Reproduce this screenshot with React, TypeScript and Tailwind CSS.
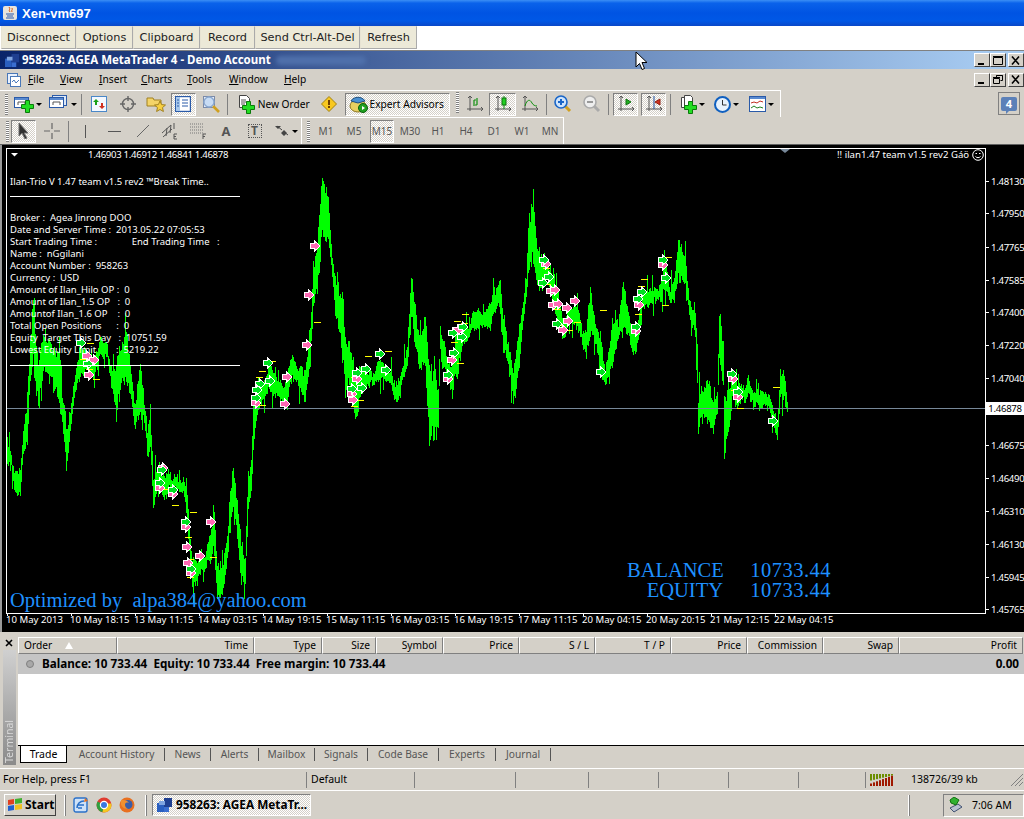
import React from "react";

// [x, top, bottom] of the green band, read off the chart by hand
const band: number[][] = [
  [7,443,463],[12,462,473],[15,467,497],[20,473,501],[23,433,460],[27,390,443],[30,337,380],[33,293,370],[38,367,413],
  [42,333,373],[47,333,373],[55,347,390],[59,353,408],[63,400,430],[66,427,468],[70,405,437],[75,373,390],[80,343,380],
  [87,353,370],[93,360,380],[100,337,357],[107,347,360],[112,370,390],[117,360,412],[125,323,377],[132,380,407],
  [135,407,433],[140,360,413],[143,393,423],[147,427,450],[150,407,453],[153,477,518],[157,460,493],[163,470,500],
  [170,473,490],[177,478,490],[183,480,493],[187,493,523],[191,553,588],[197,560,580],[205,553,567],[211,523,560],
  [214,503,560],[217,560,597],[223,563,597],[227,537,560],[229,500,537],[233,458,510],[237,500,537],[241,543,587],
  [245,557,587],[248,470,523],[251,460,493],[253,400,453],[257,377,413],[263,383,400],[270,363,393],[277,380,400],
  [283,387,403],[287,377,410],[292,347,377],[297,363,380],[305,367,403],[310,330,367],[313,263,313],[317,240,293],
  [322,170,237],[328,192,243],[332,260,280],[335,277,317],[339,293,333],[342,293,367],[345,343,400],[348,337,383],
  [355,370,417],[360,367,400],[367,370,383],[373,373,383],[380,353,377],[387,367,380],[397,383,407],[402,363,380],
  [407,343,367],[411,276,320],[415,305,347],[420,337,370],[425,308,367],[429,367,445],[434,367,447],[438,383,432],
  [440,323,357],[447,360,380],[452,357,397],[457,330,367],[465,327,343],[470,320,333],[477,307,330],[483,317,330],
  [490,300,330],[497,283,303],[500,277,317],[503,317,350],[508,340,367],[513,370,403],[517,337,387],[522,303,330],
  [526,277,300],[528,220,280],[532,192,267],[537,237,287],[542,260,293],[547,263,283],[552,273,303],[557,283,320],
  [562,317,340],[570,310,327],[577,303,327],[582,327,343],[586,330,355],[590,285,337],[595,320,340],[600,333,373],
  [605,367,385],[610,340,377],[615,310,350],[618,323,343],[623,280,330],[627,300,337],[632,330,353],[637,327,350],
  [642,290,310],[650,285,303],[658,293,303],[665,253,287],[670,287,303],[675,270,293],[678,234,283],[685,252,283],
  [689,297,317],[695,313,338],[697,338,380],[698,393,433],[702,390,420],[708,375,420],[713,403,435],[717,393,417],
  [719,310,370],[723,343,390],[724,393,459],[728,392,437],[732,370,400],[737,380,407],[742,390,403],[747,375,397],
  [753,387,403],[758,390,410],[765,390,403],[771,400,417],[777,420,442],[780,370,400],[784,367,400],[787,402,415],
];

function seeded(a: number) {
  return () => {
    a = (a + 0x6d2b79f5) | 0;
    let t = Math.imul(a ^ (a >>> 15), 1 | a);
    t = (t + Math.imul(t ^ (t >>> 7), 61 | t)) ^ t;
    return ((t ^ (t >>> 14)) >>> 0) / 4294967296;
  };
}

function buildPath() {
  const rnd = seeded(384);
  let d = "";
  let k = 0;
  let wobble = 0;
  for (let x = 7; x <= 787; x++) {
    while (k < band.length - 2 && band[k + 1][0] < x) k++;
    const [x0, t0, b0] = band[k];
    const [x1, t1, b1] = band[k + 1];
    const f = (x - x0) / (x1 - x0);
    const t = t0 + (t1 - t0) * f;
    const b = b0 + (b1 - b0) * f;
    if (x % 3 === 0) wobble = (rnd() - 0.5) * 7;
    const c = (t + b) / 2 + wobble;
    const h = (b - t) / 2;
    let top = c - h * (0.55 + 0.55 * rnd());
    let bot = c + h * (0.55 + 0.55 * rnd());
    // the odd long wick
    const r = rnd();
    if (r < 0.09) top -= 4 + rnd() * 14;
    else if (r < 0.18) bot += 4 + rnd() * 14;
    d += `M${x + 0.5} ${Math.round(top)}V${Math.round(bot)}`;
  }
  return d;
}

const pink = [[87,356],[94,360],[89,375],[315,246],[309,295],[307,345],[287,377],[285,404],[256,403],[163,468],[160,488],[173,494],[186,527],[211,522],[187,547],[200,556],[188,563],[191,573],[352,394],[353,400],[357,379],[448,379],[452,360],[458,330],[546,264],[551,291],[555,290],[553,305],[558,304],[567,308],[575,301],[568,321],[563,330],[636,331],[639,305],[663,265],[733,379],[738,397]];
const lime = [[81,343],[88,364],[268,363],[270,381],[260,384],[257,390],[256,398],[162,470],[160,483],[173,490],[186,522],[191,569],[352,389],[357,373],[362,388],[366,369],[380,354],[386,370],[448,375],[454,353],[453,333],[462,337],[463,327],[544,260],[549,277],[543,283],[557,324],[601,372],[636,327],[638,299],[642,292],[663,260],[666,278],[732,374],[738,392],[773,421]];
const dashes = [[87,343],[80,359],[86,369],[93,379],[314,322],[269,361],[259,371],[256,377],[259,405],[163,489],[172,505],[190,512],[185,537],[187,559],[187,577],[210,557],[365,356],[385,351],[357,400],[351,406],[351,377],[454,321],[462,314],[461,323],[451,342],[457,363],[543,268],[544,284],[554,309],[557,325],[566,330],[574,322],[600,310],[641,279],[638,286],[635,314],[665,257],[662,305],[773,387],[737,408],[731,390]];

const prices: [string, number][] = [["1.48130",181],["1.47950",213],["1.47765",247],["1.47585",280],["1.47400",312],["1.47220",345],["1.47040",378],["1.46675",445],["1.46490",478],["1.46310",511],["1.46130",544],["1.45945",577],["1.45765",609]];
const times = ["10 May 2013","10 May 18:15","13 May 11:15","14 May 03:15","14 May 19:15","15 May 11:15","16 May 03:15","16 May 19:15","17 May 11:15","20 May 04:15","20 May 20:15","21 May 12:15","22 May 04:15"];

const infoLines = [
  "Broker :  Agea Jinrong DOO",
  "Date and Server Time :  2013.05.22 07:05:53",
  "Start Trading Time :              End Trading Time   :",
  "Name :  nGgilani",
  "Account Number :  958263",
  "Currency :  USD",
  "Amount of Ilan_Hilo OP :  0",
  "Amount of Ilan_1.5 OP   :  0",
  "Amountof Ilan_1.6 OP    :  0",
  "Total Open Positions      :  0",
  "Equity  Target This Day   :  10751.59",
  "Lowest Equity Limit        :  5219.22",
];

const columns = [
  { label: "Order", w: "w-[99px]", left: true },
  { label: "Time", w: "w-[137px]" },
  { label: "Type", w: "w-[68px]" },
  { label: "Size", w: "w-[54px]" },
  { label: "Symbol", w: "w-[67px]" },
  { label: "Price", w: "w-[76px]" },
  { label: "S / L", w: "w-[76px]" },
  { label: "T / P", w: "w-[76px]" },
  { label: "Price", w: "w-[76px]" },
  { label: "Commission", w: "w-[76px]" },
  { label: "Swap", w: "w-[76px]" },
  { label: "Profit", w: "w-[124px]" },
];

const tabs = [
  { label: "Account History", w: "w-[96px]" },
  { label: "News", w: "w-[46px]" },
  { label: "Alerts", w: "w-[48px]" },
  { label: "Mailbox", w: "w-[56px]" },
  { label: "Signals", w: "w-[53px]" },
  { label: "Code Base", w: "w-[71px]" },
  { label: "Experts", w: "w-[57px]" },
  { label: "Journal", w: "w-[55px]" },
];

const timeframes = ["M1", "M5", "M15", "M30", "H1", "H4", "D1", "W1", "MN"];
const statusGaps = ["w-[101px]", "w-[73px]", "w-[70px]", "w-[70px]", "w-[70px]", "w-[67px]"];

const dither = "bg-[repeating-conic-gradient(#ffffff_0_25%,#d4d0c8_0_50%)] bg-[length:2px_2px]";

function Sink({ className, children }: { className: string; children?: React.ReactNode }) {
  return (
    <div className={`flex items-center justify-center border border-t-[#808080] border-l-[#808080] border-b-white border-r-white ${dither} ${className}`}>
      {children}
    </div>
  );
}

function Caret() {
  return <span className="ml-[2px] h-0 w-0 border-x-[3px] border-t-[3px] border-x-transparent border-t-black" />;
}

function Grip() {
  return (
    <div className="flex h-[21px] w-[8px] justify-center">
      <div className="h-full w-[3px] bg-[repeating-linear-gradient(180deg,#808080_0_1px,#ffffff_1px_2px)]" />
    </div>
  );
}

function Sep({ className = "w-[6px]" }: { className?: string }) {
  return (
    <div className={`flex h-[21px] justify-center ${className}`}>
      <div className="h-full w-[1px] bg-[#808080]" />
    </div>
  );
}

function Plus({ x, y }: { x: number; y: number }) {
  return (
    <path
      transform={`translate(${x} ${y})`}
      d="M4 0h4v4h4v4H8v4H4V8H0V4h4z"
      fill="#22dd22"
      stroke="#0a7a0a"
    />
  );
}

function ChartDoc({ extra = false }: { extra?: boolean }) {
  return (
    <svg width="20" height="18" viewBox="0 0 20 18">
      {extra && <rect x="3.5" y="0.5" width="14" height="10" fill="#dce8f8" stroke="#2a5aa8" />}
      <rect x="0.5" y="2.5" width="14" height="10" fill="#ffffff" stroke="#2a5aa8" />
      <rect x="1" y="3" width="13" height="2" fill="#5a8ad0" />
      <path d="M4 7h7M4 7v3M11 7v3" stroke="#555" fill="none" />
      {!extra && <Plus x={7.5} y={5.5} />}
    </svg>
  );
}

function Magnifier({ sign, faded = false }: { sign: "+" | "-"; faded?: boolean }) {
  return (
    <svg width="18" height="18" viewBox="0 0 18 18">
      <path d="M10 10l6 6" stroke={faded ? "#aaa" : "#d0a020"} strokeWidth="3" />
      <circle cx="7" cy="7" r="6" fill={faded ? "#eeeeee" : "#cfe4fb"} stroke={faded ? "#aaaaaa" : "#1a66c8"} strokeWidth="1.6" />
      <path d={sign === "+" ? "M4 7h6M7 4v6" : "M4 7h6"} stroke={faded ? "#999" : "#1a66c8"} strokeWidth="2" />
    </svg>
  );
}

function Axes({ children }: { children: React.ReactNode }) {
  return (
    <svg width="18" height="18" viewBox="0 0 18 18">
      <path d="M4 1v15M1 14h16" stroke="#555" fill="none" />
      <path d="M2 3l2-2 2 2M15 12l2 2-2 2" stroke="#555" fill="none" />
      {children}
    </svg>
  );
}

function TitleButton({ kind, className = "" }: { kind: "min" | "max" | "restore" | "close"; className?: string }) {
  return (
    <div className={`flex h-[14px] w-[16px] items-center justify-center border border-t-white border-l-white border-b-[#404040] border-r-[#404040] bg-[#d4d0c8] ${className}`}>
      <svg width="10" height="9" viewBox="0 0 10 9">
        {kind === "min" && <path d="M1 7h6v2H1z" fill="#000" />}
        {kind === "max" && <path d="M0.5 1.5h9v7h-9zM0 0.5h10" stroke="#000" fill="none" />}
        {kind === "restore" && <path d="M3.5 2.5V0.5h6v5h-2M0.5 3.5h6v5h-6zM0 2.5h7M3 0h7" stroke="#000" fill="none" />}
        {kind === "close" && <path d="M1 0.5l7 8M8 0.5l-7 8" stroke="#000" strokeWidth="1.6" fill="none" />}
      </svg>
    </div>
  );
}

function MtLogo({ size = 16 }: { size?: number }) {
  return (
    <svg width={size} height={size} viewBox="0 0 16 16">
      <rect x="0" y="6" width="7" height="9" fill="#2a5fc0" />
      <rect x="7" y="1" width="8" height="9" fill="#1f3f90" />
      <rect x="2" y="4" width="6" height="4" fill="#7fa4e0" />
      <rect x="7" y="10" width="5" height="5" fill="#3a6ed0" />
    </svg>
  );
}

function Toolbars() {
  return (
    <div className="flex flex-col">
      {/* first row */}
      <div className="flex h-[27px] items-center">
        <div className="flex h-[27px] w-[781px] items-center border-t border-r border-t-white border-r-white pl-[3px]">
          <Grip />
          <div className="flex w-[35px] items-center pl-[3px]"><ChartDoc /><Caret /></div>
          <div className="flex w-[33px] items-center pl-[3px]"><ChartDoc extra /><Caret /></div>
          <Sep />
          <div className="flex w-[28px] justify-center">
            <svg width="16" height="16" viewBox="0 0 16 16">
              <rect x="0.5" y="0.5" width="15" height="15" fill="#f4f8ff" stroke="#4a88c8" />
              <path d="M5 3l3 3H6v3H4V6H2z" fill="#18a018" />
              <path d="M11 13l3-3h-2V7h-2v3H8z" fill="#d03020" />
            </svg>
          </div>
          <div className="flex w-[30px] justify-center">
            <svg width="16" height="16" viewBox="0 0 16 16">
              <circle cx="8" cy="8" r="5.5" fill="none" stroke="#666" strokeWidth="1.4" />
              <path d="M8 0v5M8 11v5M0 8h5M11 8h5" stroke="#666" strokeWidth="1.4" />
            </svg>
          </div>
          <div className="flex w-[26px] justify-center">
            <svg width="20" height="18" viewBox="0 0 20 18">
              <path d="M1 3h6l1 2h7v6H1z" fill="#f4d468" stroke="#a08020" />
              <path d="M14 6l1.6 3.6 3.9.4-3 2.6.9 3.9-3.4-2-3.4 2 .9-3.900-3-2.600 3.900-.4z" fill="#f8d040" stroke="#a08020" />
            </svg>
          </div>
          <Sink className="ml-[2px] h-[23px] w-[25px]">
            <svg width="16" height="16" viewBox="0 0 16 16">
              <rect x="0.5" y="0.5" width="15" height="15" fill="#ffffff" stroke="#2a5aa8" strokeWidth="1.4" />
              <rect x="1" y="1" width="4" height="14" fill="#a8c8ec" />
              <path d="M7 4h6M7 7h6M7 10h6M2 4h2M2 7h2M2 10h2" stroke="#2a5aa8" />
            </svg>
          </Sink>
          <div className="ml-[2px] flex w-[26px] justify-center">
            <svg width="18" height="18" viewBox="0 0 18 18">
              <rect x="1.5" y="1.5" width="11" height="11" fill="#e8eef8" stroke="#7a8aa8" />
              <path d="M11 11l6 6" stroke="#d0a020" strokeWidth="2.6" />
              <circle cx="7" cy="7" r="5" fill="#c8dcf4" stroke="#8aa8d0" strokeWidth="1.4" />
            </svg>
          </div>
          <Sep className="w-[8px]" />
          <div className="flex w-[84px] items-center gap-[3px] pl-[6px]">
            <svg width="17" height="19" viewBox="0 0 17 19">
              <path d="M1.5 0.5h7l3 3v9h-10z" fill="#ffffff" stroke="#444" />
              <path d="M3 5h5M3 7h6M3 9h4" stroke="#555" />
              <Plus x={4.5} y={6.5} />
            </svg>
            <span className="whitespace-nowrap text-[10.2px] leading-none text-black">New Order</span>
          </div>
          <div className="flex w-[26px] justify-center">
            <svg width="16" height="16" viewBox="0 0 16 16">
              <path d="M8 0.5L15.5 8 8 15.5 0.5 8z" fill="#f8c820" stroke="#a08010" />
              <path d="M7 4h2v5H7zM7 10h2v2H7z" fill="#704000" />
            </svg>
          </div>
          <Sink className="ml-[3px] h-[23px] w-[106px] justify-start pl-[3px]">
            <svg width="20" height="18" viewBox="0 0 20 18">
              <ellipse cx="9" cy="11" rx="8" ry="6" fill="#e8d060" stroke="#907820" />
              <path d="M2 6c3-5 11-5 14 0l-7 2z" fill="#4a90d0" stroke="#205080" />
              <circle cx="14" cy="13" r="4.5" fill="#20a020" stroke="#0a600a" />
              <path d="M13 11l3 2-3 2z" fill="#ffffff" />
            </svg>
            <span className="ml-[1px] whitespace-nowrap text-[10.2px] leading-none text-black">Expert Advisors</span>
          </Sink>
          <div className="flex h-[25px] w-[11px] pl-[1px]">
            <div className="h-full w-[1px] bg-white" />
            <div className="ml-[2px]"><Grip /></div>
          </div>
          <div className="flex w-[28px] justify-center">
            <Axes><path d="M8 11V5M8 5h2M11 10V3M9 10h2" stroke="#109010" fill="none" strokeWidth="1.2" /></Axes>
          </div>
          <Sink className="h-[23px] w-[27px]">
            <Axes><path d="M10 1v13" stroke="#109010" /><rect x="8" y="3" width="4" height="7" fill="#20d020" stroke="#107010" /></Axes>
          </Sink>
          <div className="flex w-[28px] justify-center">
            <Axes><path d="M4 11c2-7 5-7 7-3 1 2 3 3 5 3" stroke="#109010" fill="none" /></Axes>
          </div>
          <Sep className="w-[4px]" />
          <div className="flex w-[29px] justify-center"><Magnifier sign="+" /></div>
          <div className="flex w-[29px] justify-center"><Magnifier sign="-" faded /></div>
          <Sep className="w-[4px]" />
          <Sink className="ml-[3px] h-[23px] w-[25px]">
            <Axes><path d="M9 4v6l5-3z" fill="#20b020" stroke="#107010" /></Axes>
          </Sink>
          <Sink className="ml-[3px] h-[23px] w-[25px]">
            <Axes><path d="M9 1v13" stroke="#2050a0" /><path d="M15 4v6l-5-3z" fill="#d03020" stroke="#902010" /></Axes>
          </Sink>
          <Sep className="w-[8px]" />
          <div className="flex w-[34px] items-center pl-[6px]">
            <svg width="17" height="19" viewBox="0 0 17 19">
              <path d="M1.5 2.5h5v10h-5z" fill="#ffffff" stroke="#444" />
              <path d="M4.5 0.5h6l2 2v9h-8z" fill="#ffffff" stroke="#444" />
              <Plus x={4.5} y={6.5} />
            </svg>
            <Caret />
          </div>
          <div className="flex w-[34px] items-center pl-[6px]">
            <svg width="17" height="17" viewBox="0 0 17 17">
              <circle cx="8.5" cy="8.5" r="7.5" fill="#e8f2fc" stroke="#1060c0" strokeWidth="2" />
              <path d="M8.5 4v5h4" stroke="#333" fill="none" />
            </svg>
            <Caret />
          </div>
          <div className="flex w-[38px] items-center pl-[7px]">
            <svg width="17" height="16" viewBox="0 0 17 16">
              <rect x="0.5" y="0.5" width="16" height="15" fill="#ffffff" stroke="#2a5aa8" />
              <rect x="1" y="1" width="15" height="2" fill="#5a8ad0" />
              <path d="M2 7l3-1 3 1 3-2 3 1" stroke="#c03020" fill="none" />
              <path d="M2 12l3-2 3 2 3-1 3 1" stroke="#208020" fill="none" />
            </svg>
            <Caret />
          </div>
        </div>
        <div className="ml-auto mr-[4px] flex h-[23px] w-[22px] items-center justify-center border border-[#808080]">
          <div className="relative flex h-[14px] w-[16px] items-center justify-center rounded-[2px] bg-[#5b80b8] text-[11px] font-bold leading-none text-white">
            4
            <span className="absolute -bottom-[3px] left-[5px] h-0 w-0 border-r-[4px] border-t-[4px] border-r-transparent border-t-[#5b80b8]" />
          </div>
        </div>
      </div>

      {/* second row */}
      <div className="flex h-[28px] items-start border-b border-b-[#606060] bg-[#d4d0c8]">
        <div className="flex h-[27px] w-[302px] items-center border-t border-r border-t-white border-r-white pl-[3px]">
          <Grip />
          <Sink className="h-[23px] w-[25px]">
            <svg width="12" height="16" viewBox="0 0 12 16"><path d="M1 0v13l3-3 3 6 2-1-3-5h4z" fill="#303030" stroke="#707070" /></svg>
          </Sink>
          <div className="ml-[8px] flex w-[16px] justify-center">
            <svg width="16" height="16" viewBox="0 0 16 16"><path d="M8 0v6M8 10v6M0 8h6M10 8h6" stroke="#666" strokeWidth="1.2" /></svg>
          </div>
          <Sep className="ml-[5px] w-[6px]" />
          <div className="flex w-[29px] justify-center"><div className="h-[13px] w-[1px] bg-[#555]" /></div>
          <div className="flex w-[29px] justify-center"><div className="h-[1px] w-[13px] bg-[#555]" /></div>
          <div className="flex w-[28px] justify-center">
            <svg width="14" height="14" viewBox="0 0 14 14"><path d="M1 13L13 1" stroke="#666" /></svg>
          </div>
          <div className="flex w-[28px] justify-center">
            <svg width="18" height="18" viewBox="0 0 18 18">
              <path d="M0 11l9-8M1 15l9-8M4 14l1-8M8 11l1-8M12 7l0-6" stroke="#555" fill="none" />
              <path d="M12 17v-5h3M12 14.500h2M12 17h3" stroke="#555" fill="none" />
            </svg>
          </div>
          <div className="flex w-[27px] justify-center">
            <svg width="18" height="18" viewBox="0 0 18 18">
              <path d="M0 2h14M0 5h14M0 8h14M0 11h14" stroke="#777" strokeDasharray="1 1" />
              <path d="M13 17v-5h3M13 14.500h2" stroke="#555" fill="none" />
            </svg>
          </div>
          <div className="flex w-[28px] justify-center text-[13px] font-bold leading-none text-[#555]">A</div>
          <div className="flex w-[29px] justify-center">
            <div className="flex h-[14px] w-[14px] items-center justify-center border border-dotted border-[#555] text-[12px] font-bold leading-none text-[#555]">T</div>
          </div>
          <div className="flex w-[30px] items-center pl-[6px]">
            <svg width="15" height="12" viewBox="0 0 15 12">
              <path d="M0 1l3 3 3-3zM6 8l3-3 3 3zM6 8l3 3 3-3z" fill="#444" />
              <path d="M2 1l5 4M9 7l4 3" stroke="#444" />
            </svg>
            <Caret />
          </div>
        </div>
        <div className="flex h-[27px] w-[262px] items-center border-t border-r border-t-white border-r-white">
          <div className="ml-[2px]"><Grip /></div>
          <div className="flex">
            {timeframes.map((t) =>
              t === "M15" ? (
                <Sink key={t} className="mx-[2px] h-[23px] w-[24px] text-[10px] leading-none text-[#555]">{t}</Sink>
              ) : (
                <div key={t} className="flex h-[23px] w-[28px] items-center justify-center text-[10px] leading-none text-[#555]">{t}</div>
              ),
            )}
          </div>
        </div>
      </div>
    </div>
  );
}

function Chart() {
  const path = buildPath();
  return (
    <div className="relative h-[487px] border-l-2 border-l-[#9a9a9a] bg-black">
      <svg className="absolute -left-[2px] top-0" width="1024" height="487" viewBox="0 145 1024 487">
        <path d={path} stroke="#00ff00" strokeWidth="1.2" fill="none" shapeRendering="crispEdges" />
        <path d="M7 408.500H985" stroke="#778899" shapeRendering="crispEdges" />
        {dashes.map(([x, y], i) => (
          <path key={i} d={`M${x} ${y + 0.5}h7`} stroke="#ffff00" shapeRendering="crispEdges" />
        ))}
        {pink.map(([x, y], i) => (
          <path key={i} transform={`translate(${x} ${y})`} d="M-5 -2.500H-1V-5.500L5 0 -1 5.500V2.500H-5Z" fill="#ff69b4" stroke="#ffffff" shapeRendering="crispEdges" />
        ))}
        {lime.map(([x, y], i) => (
          <path key={i} transform={`translate(${x} ${y})`} d="M-5 -2.500H-1V-5.500L5 0 -1 5.500V2.500H-5Z" fill="#00e020" stroke="#ffffff" shapeRendering="crispEdges" />
        ))}
        <rect x="6.500" y="148.500" width="979" height="465" fill="none" stroke="#ffffff" shapeRendering="crispEdges" />
        <path d="M780 149h10l-5 4z" fill="#778899" />
        <path d="M11 153h7l-3.500 3.500z" fill="#ffffff" />
        {prices.map(([p, y]) => (
          <g key={p}>
            <path d={`M985 ${y + 0.5}h4`} stroke="#ffffff" shapeRendering="crispEdges" />
            <text x="991" y={y + 4} fill="#ffffff" fontSize="9.600" letterSpacing="-0.3" fontFamily="Noto Sans, sans-serif">{p}</text>
          </g>
        ))}
        {times.map((_, i) => (
          <path key={i} d={`M${7.5 + i * 64} 613v3`} stroke="#ffffff" shapeRendering="crispEdges" />
        ))}
      </svg>

      {/* price tag of the last bid */}
      <div className="absolute left-[984px] top-[257px] flex h-[13px] w-[38px] items-center justify-center bg-white text-[9.600px] leading-none tracking-[-0.3px] text-black">
        1.46878
      </div>

      {/* top labels */}
      <div className="absolute left-[86px] top-[4px] text-[9.600px] leading-[12px] tracking-[-0.3px] text-white">
        1.46903 1.46912 1.46841 1.46878
      </div>
      <div className="absolute left-[835px] top-[4px] flex items-center gap-[3px] text-[9.600px] leading-[12px] text-white">
        !! ilan1.47 team v1.5 rev2 Gáö
        <svg width="12" height="12" viewBox="0 0 12 12">
          <circle cx="6" cy="6" r="5.300" fill="none" stroke="#fff" />
          <path d="M3.500 4.500h1.500M7 4.500h1.500M3.500 7.500c1 1.500 4 1.500 5 0" stroke="#fff" fill="none" />
        </svg>
      </div>

      {/* expert advisor info block */}
      <div className="absolute left-[8px] top-[31px] w-[232px] whitespace-pre text-[9.500px] text-white">
        <div className="h-[12px] leading-[12px]">Ilan-Trio V 1.47 team v1.5 rev2 ™Break Time..</div>
        <div className="mt-[8px] h-[1px] w-[230px] bg-white" />
        <div className="mt-[15px] flex flex-col">
          {infoLines.map((l) => (
            <div key={l} className="h-[12px] leading-[12px]">{l}</div>
          ))}
        </div>
        <div className="mt-[9px] h-[1px] w-[230px] bg-white" />
      </div>

      {/* balance block */}
      <div className="absolute left-[625px] top-[415px] w-[204px] font-['Liberation_Serif',serif] text-[20.500px] leading-[20px] text-[#1e90ff]">
        <div className="flex justify-between"><span className="w-[96px] text-right">BALANCE</span><span className="tracking-[0.5px]">10733.44</span></div>
        <div className="flex justify-between"><span className="w-[96px] text-right">EQUITY</span><span className="tracking-[0.5px]">10733.44</span></div>
      </div>
      <div className="absolute left-[8px] top-[442px] whitespace-pre font-['Liberation_Serif',serif] text-[20.500px] leading-[26px] text-[#1e90ff]">
        Optimized by  alpa384@yahoo.com
      </div>

      {/* time axis */}
      <div className="absolute left-[4px] top-[469px] flex text-[9.600px] leading-[12px] text-white">
        {times.map((t) => (
          <div key={t} className="w-[64px] whitespace-nowrap">{t}</div>
        ))}
      </div>
    </div>
  );
}

function Terminal() {
  return (
    <div className="flex h-[136px] bg-[#d4d0c8] pt-[5px]">
      <div className="flex w-[18px] flex-col items-center">
        <svg width="8" height="8" viewBox="0 0 8 8" className="mt-[2px]"><path d="M1 1l6 6M7 1l-6 6" stroke="#000" strokeWidth="1.6" /></svg>
        <div className="ml-[1px] mt-[3px] flex h-[115px] w-[13px] items-end justify-center bg-[linear-gradient(180deg,#d0d0d0,#8a8a8a)] pb-[2px]">
          <span className="rotate-180 text-[10.500px] leading-[13px] text-[#d8d8d8] [writing-mode:vertical-rl]">Terminal</span>
        </div>
      </div>
      <div className="flex min-w-0 flex-1 flex-col">
        <div className="flex h-[17px]">
          {columns.map((c, i) => (
            <div
              key={i}
              className={`flex h-full items-center border border-t-white border-l-white border-b-[#808080] border-r-[#808080] px-[5px] text-[10.200px] leading-none text-black ${c.w} ${c.left ? "justify-start gap-[13px]" : "justify-end"}`}
            >
              {c.label}
              {c.left && <span className="h-0 w-0 border-x-[4px] border-b-[7px] border-x-transparent border-b-white" />}
            </div>
          ))}
        </div>
        <div className="flex h-[20px] items-center justify-between bg-[#c5c5c5] pl-[8px] pr-[5px] text-[11.700px] font-bold leading-none text-black">
          <div className="flex items-center whitespace-pre">
            <span className="mr-[8px] h-[8px] w-[8px] rounded-full border border-[#808080] bg-[#a8a8a8]" />
            Balance: 10 733.44  Equity: 10 733.44  Free margin: 10 733.44
          </div>
          <span>0.00</span>
        </div>
        <div className="flex-1 bg-white" />
        <div className="flex h-[23px] items-start border-t border-t-black text-[10.200px] leading-none text-[#555]">
          <div className="ml-[2px] flex h-[17px] w-[47px] items-center justify-center border-x border-b border-x-black border-b-black bg-white text-[10.500px] text-black">Trade</div>
          <div className="mt-[2px] flex pl-[2px]">
            {tabs.map((t) => (
              <div key={t.label} className={`flex h-[13px] items-center justify-center border-r border-r-[#555] ${t.w}`}>{t.label}</div>
            ))}
          </div>
        </div>
      </div>
    </div>
  );
}

function StatusBar() {
  return (
    <div className="flex h-[23px] items-center border-y border-t-white border-b-white bg-[#d4d0c8] text-[10.500px] leading-none text-black">
      <div className="w-[306px] pl-[3px]">For Help, press F1</div>
      <div className="flex h-[16px] w-[108px] items-center border-l border-l-[#808080] pl-[4px]">Default</div>
      {statusGaps.map((w, i) => (
        <div key={i} className={`h-[16px] border-l border-l-[#808080] ${w}`} />
      ))}
      <div className="flex h-[16px] items-center whitespace-nowrap border-l border-l-[#808080] pl-[4px]">
        <svg width="24" height="12" viewBox="0 0 24 12">
          {[0, 1, 2, 3, 4, 5, 6, 7].map((i) => (
            <g key={i}>
              <rect x={i * 3} y="0" width="2" height={6.500 - i * 0.700} fill="#6b8e00" />
              <rect x={i * 3} y={9.500 - i * 1.100} width="2" height={2.500 + i * 1.100} fill="#a01800" />
            </g>
          ))}
        </svg>
        <span className="ml-[17px]">138726/39 kb</span>
      </div>
      <svg className="ml-auto" width="14" height="14" viewBox="0 0 14 14">
        <path d="M1 13L13 1M5 13l8-8M9 13l4-4" stroke="#808080" />
      </svg>
    </div>
  );
}

function Taskbar() {
  return (
    <div className="flex h-[28px] items-center bg-[#d4d0c8] pl-[4px]">
      <div className="flex h-[22px] w-[52px] items-center gap-[2px] border border-t-white border-l-white border-b-[#404040] border-r-[#404040] pl-[2px] text-[12px] font-bold leading-none text-black">
        <svg width="16" height="14" viewBox="0 0 16 14">
          <path d="M1 2l6-1v5l-6 1z" fill="#e04020" />
          <path d="M8 1l7-1v5l-7 1z" fill="#40b030" />
          <path d="M1 8l6-1v5l-6 1z" fill="#2060d0" />
          <path d="M8 7l7-1v5l-7 1z" fill="#f0c020" />
        </svg>
        Start
      </div>
      <div className="ml-[8px] h-[21px] w-[2px] border-l border-r border-l-white border-r-[#808080]" />
      <div className="ml-[7px] flex items-center gap-[7px]">
        <svg width="16" height="16" viewBox="0 0 16 16">
          <rect x="1" y="1" width="13" height="14" rx="2" fill="#cfe2f8" stroke="#2a70c8" strokeWidth="1.4" />
          <path d="M4 11c0-4 3-7 7-7M5 8h6M5 11h4" stroke="#2a70c8" strokeWidth="1.6" fill="none" />
          <path d="M12 1l3 3-4 1z" fill="#e07020" />
        </svg>
        <svg width="16" height="16" viewBox="0 0 16 16">
          <circle cx="8" cy="8" r="7.500" fill="#e03c30" />
          <path d="M8 8L1.500 4.500A7.500 7.500 0 0 0 6.500 15.300z" fill="#30a040" />
          <path d="M8 8l-1.500 7.300A7.500 7.500 0 0 0 15.300 6.500H8z" fill="#f4c820" />
          <circle cx="8" cy="8" r="3.600" fill="#3a78e0" stroke="#ffffff" strokeWidth="1.200" />
        </svg>
        <svg width="16" height="16" viewBox="0 0 16 16">
          <circle cx="8" cy="8" r="7.500" fill="#e87020" />
          <circle cx="9" cy="7.500" r="4.500" fill="#3a5ea8" />
          <path d="M2 3c3 0 6 0 8 3-3-1-4 0-4 2 0 1.500 1 3 3 3.500-3 1-6-1-7-4z" fill="#f09030" />
        </svg>
      </div>
      <div className="ml-[10px] h-[21px] w-[2px] border-l border-r border-l-white border-r-[#808080]" />
      <Sink className="ml-[5px] h-[22px] w-[159px] justify-start gap-[3px] pl-[4px]">
        <MtLogo />
        <span className="whitespace-nowrap text-[11.800px] font-bold leading-none text-black">958263: AGEA MetaTr...</span>
      </Sink>
      <div className="ml-[597px] h-[21px] w-[2px] border-l border-r border-l-white border-r-[#808080]" />
      <div className="ml-[33px] flex h-[23px] flex-1 items-center border border-t-[#808080] border-l-[#808080] border-b-white border-r-white pl-[5px] text-[10.500px] leading-none text-black">
        <svg width="14" height="16" viewBox="0 0 14 16">
          <path d="M1 11l8-4 4 3-8 5z" fill="#b8c0d0" stroke="#405070" />
          <path d="M1 3l4-3 5 3-3 5-5-2z" fill="#30b030" stroke="#107010" />
        </svg>
        <span className="ml-[9px]">7:06 AM</span>
      </div>
    </div>
  );
}

export default function App() {
  return (
    <div className="relative h-[819px] w-[1024px] overflow-hidden bg-[#d4d0c8] font-['Noto_Sans',sans-serif]">
      {/* remote viewer title */}
      <div className="flex h-[26px] items-center gap-[5px] bg-[linear-gradient(180deg,#3b8ff5_0%,#0a62ea_12%,#0054e3_50%,#0058e6_80%,#0a48c8_100%)] pl-[3px]">
        <div className="flex h-[14px] w-[14px] items-center justify-center rounded-[2px] bg-[#e8e4dc]">
          <svg width="11" height="12" viewBox="0 0 11 12">
            <path d="M4 0c2 2-1 3 1 5M7 1c1 2-1 2 0 4" stroke="#d85a10" fill="none" />
            <path d="M1 7h8M2 9h6M1 11h8" stroke="#2a5ab0" />
          </svg>
        </div>
        <span className="font-['Liberation_Sans',sans-serif] text-[13px] font-bold leading-none text-white">Xen-vm697</span>
      </div>

      {/* remote viewer buttons */}
      <div className="flex h-[24px] items-start bg-white pl-[1px] font-['DejaVu_Sans',sans-serif] text-[11.300px] leading-none text-[#222]">
        <div className="flex h-[23px] w-[75px] items-center justify-center border border-[#e8e4d4] border-r-[#aaa] border-b-[#aaa] bg-[#ece9d8] pt-[1px]">Disconnect</div>
        <div className="flex h-[23px] w-[57px] items-center justify-center border border-[#e8e4d4] border-r-[#aaa] border-b-[#aaa] bg-[#ece9d8] pt-[1px]">Options</div>
        <div className="flex h-[23px] w-[67px] items-center justify-center border border-[#e8e4d4] border-r-[#aaa] border-b-[#aaa] bg-[#ece9d8] pt-[1px]">Clipboard</div>
        <div className="flex h-[23px] w-[55px] items-center justify-center border border-[#e8e4d4] border-r-[#aaa] border-b-[#aaa] bg-[#ece9d8] pt-[1px]">Record</div>
        <div className="flex h-[23px] w-[105px] items-center justify-center border border-[#e8e4d4] border-r-[#aaa] border-b-[#aaa] bg-[#ece9d8] pt-[1px]">Send Ctrl-Alt-Del</div>
        <div className="flex h-[23px] w-[57px] items-center justify-center border border-[#e8e4d4] border-r-[#aaa] border-b-[#aaa] bg-[#ece9d8] pt-[1px]">Refresh</div>
      </div>

      {/* metatrader title */}
      <div className="relative flex h-[19px] items-center gap-[2px] border-t border-t-[#808080] bg-[linear-gradient(90deg,#0a246a_0%,#a6caf0_96%)] pl-[5px]">
        <MtLogo size={15} />
        <span className="text-[11.500px] font-bold leading-none text-white">958263: AGEA MetaTrader 4 - Demo Account</span>
        <div className="absolute left-[276px] top-[5px] h-[9px] w-[90px] rounded-full bg-[#4f70ab] blur-[2px]" />
        <div className="ml-auto flex items-center">
          <TitleButton kind="min" />
          <TitleButton kind="max" />
          <TitleButton kind="close" className="ml-[2px]" />
        </div>
      </div>

      {/* menu */}
      <div className="flex h-[21px] items-center pl-[7px] text-[10.200px] leading-none text-black">
        <svg width="14" height="14" viewBox="0 0 14 14" className="mr-[7px]">
          <rect x="0.500" y="0.500" width="10" height="10" fill="#e8f0fc" stroke="#4a78b8" />
          <rect x="3.500" y="3.500" width="10" height="10" fill="#ffffff" stroke="#4a78b8" />
          <path d="M5 9l2-2 2 3 3-3" stroke="#4a78b8" fill="none" />
        </svg>
        <div className="w-[32px]"><u>F</u>ile</div>
        <div className="w-[39px]"><u>V</u>iew</div>
        <div className="w-[42px]"><u>I</u>nsert</div>
        <div className="w-[46px]"><u>C</u>harts</div>
        <div className="w-[42px]"><u>T</u>ools</div>
        <div className="w-[55px]"><u>W</u>indow</div>
        <div><u>H</u>elp</div>
        <div className="ml-auto flex items-center">
          <TitleButton kind="min" />
          <TitleButton kind="restore" />
          <TitleButton kind="close" className="ml-[2px]" />
        </div>
      </div>

      <Toolbars />
      <Chart />
      <Terminal />
      <StatusBar />
      <Taskbar />

      {/* mouse pointer */}
      <svg className="absolute left-[635px] top-[51px]" width="14" height="22" viewBox="0 0 14 22">
        <path d="M1 1v15l3.500-3.500 2.500 6 2.500-1-2.500-6h5z" fill="#ffffff" stroke="#000000" />
      </svg>
    </div>
  );
}
